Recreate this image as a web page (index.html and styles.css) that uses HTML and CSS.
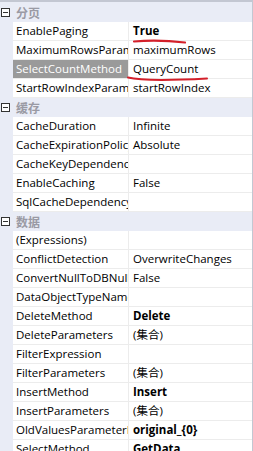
FILE: index.html
```html
<!DOCTYPE html>
<html>
<head>
    <title>属性</title>
    <meta charset="utf-8">
    <link rel="stylesheet" href="styles.css">
</head>
<body>
<div class="grid">
    <div class="cat"><span class="toggle"></span><span class="cat-name">分页</span></div>
    <div class="row"><div class="name">EnablePaging</div><div class="value bold">True</div></div>
    <div class="row"><div class="name">MaximumRowsParameterName</div><div class="value">maximumRows</div></div>
    <div class="row selected"><div class="name">SelectCountMethod</div><div class="value">QueryCount</div></div>
    <div class="row"><div class="name">StartRowIndexParameterName</div><div class="value">startRowIndex</div></div>

    <div class="cat"><span class="toggle"></span><span class="cat-name">缓存</span></div>
    <div class="row"><div class="name">CacheDuration</div><div class="value">Infinite</div></div>
    <div class="row"><div class="name">CacheExpirationPolicy</div><div class="value">Absolute</div></div>
    <div class="row"><div class="name">CacheKeyDependency</div><div class="value"></div></div>
    <div class="row"><div class="name">EnableCaching</div><div class="value">False</div></div>
    <div class="row"><div class="name">SqlCacheDependency</div><div class="value"></div></div>

    <div class="cat"><span class="toggle"></span><span class="cat-name">数据</span></div>
    <div class="row"><div class="name">(Expressions)</div><div class="value"></div></div>
    <div class="row"><div class="name">ConflictDetection</div><div class="value">OverwriteChanges</div></div>
    <div class="row"><div class="name">ConvertNullToDBNull</div><div class="value">False</div></div>
    <div class="row"><div class="name">DataObjectTypeName</div><div class="value"></div></div>
    <div class="row"><div class="name">DeleteMethod</div><div class="value bold">Delete</div></div>
    <div class="row"><div class="name">DeleteParameters</div><div class="value">(集合)</div></div>
    <div class="row"><div class="name">FilterExpression</div><div class="value"></div></div>
    <div class="row"><div class="name">FilterParameters</div><div class="value">(集合)</div></div>
    <div class="row"><div class="name">InsertMethod</div><div class="value bold">Insert</div></div>
    <div class="row"><div class="name">InsertParameters</div><div class="value">(集合)</div></div>
    <div class="row"><div class="name">OldValuesParameterFormatString</div><div class="value bold">original_{0}</div></div>
    <div class="row"><div class="name">SelectMethod</div><div class="value bold">GetData</div></div>

    <!-- traits rouges à main levée -->
    <svg class="marks" width="253" height="90" viewBox="0 0 253 90">
        <path d="M134 41.5 C 150 40, 168 40.5, 185 42.5" stroke="#d3202a" stroke-width="2.2" fill="none" stroke-linecap="round"/>
        <path d="M128 77.5 C 140 80.5, 170 80.5, 207 78.5" stroke="#d3202a" stroke-width="2" fill="none" stroke-linecap="round"/>
    </svg>
</div>
</body>
</html>
```

FILE: styles.css
```css
body {
    margin: 0;
    background-color: #ffffff;
    font-family: "Open Sans", "Noto Sans CJK SC", sans-serif;
    font-size: 11.5px;
    color: #000000;
    overflow: hidden;
}
.grid {
    position: relative;
    width: 252px;
    height: 448px;
    padding-top: 1px;
    border-top: 2px solid #c3c7d2;
    border-right: 1px solid #c3c7d2;
    background-color: #e9ecf6;
    overflow: hidden;
}
.cat {
    display: flex;
    align-items: center;
    height: 19px;
    background-color: #e9ecf6;
}
.toggle {
    position: relative;
    box-sizing: border-box;
    width: 9px;
    height: 9px;
    margin-left: 1px;
    border: 1px solid #333;
    background-color: #fff;
}
.toggle::after {
    content: "";
    position: absolute;
    left: 1px;
    top: 3px;
    width: 5px;
    height: 1px;
    background-color: #333;
}
.cat-name {
    margin-left: 6px;
    color: #9a9aa4;
    font-family: "Noto Sans CJK SC", sans-serif;
    font-weight: bold;
    font-size: 12px;
}
.row {
    display: grid;
    grid-template-columns: 116px 1fr;
    height: 19px;
    margin-left: 13px;
    background-color: #ffffff;
    box-sizing: border-box;
    border-bottom: 1px solid #ececec;
}
.name, .value {
    padding-left: 3px;
    line-height: 18px;
    white-space: nowrap;
    overflow: hidden;
}
.name {
    border-right: 1px solid #ececec;
}
.value {
    padding-left: 4px;
}
.bold {
    font-weight: bold;
}
.selected .name {
    background-color: #9a9a9a;
    color: #ffffff;
}
.marks {
    position: absolute;
    top: -2px;
    left: 0;
}
```
